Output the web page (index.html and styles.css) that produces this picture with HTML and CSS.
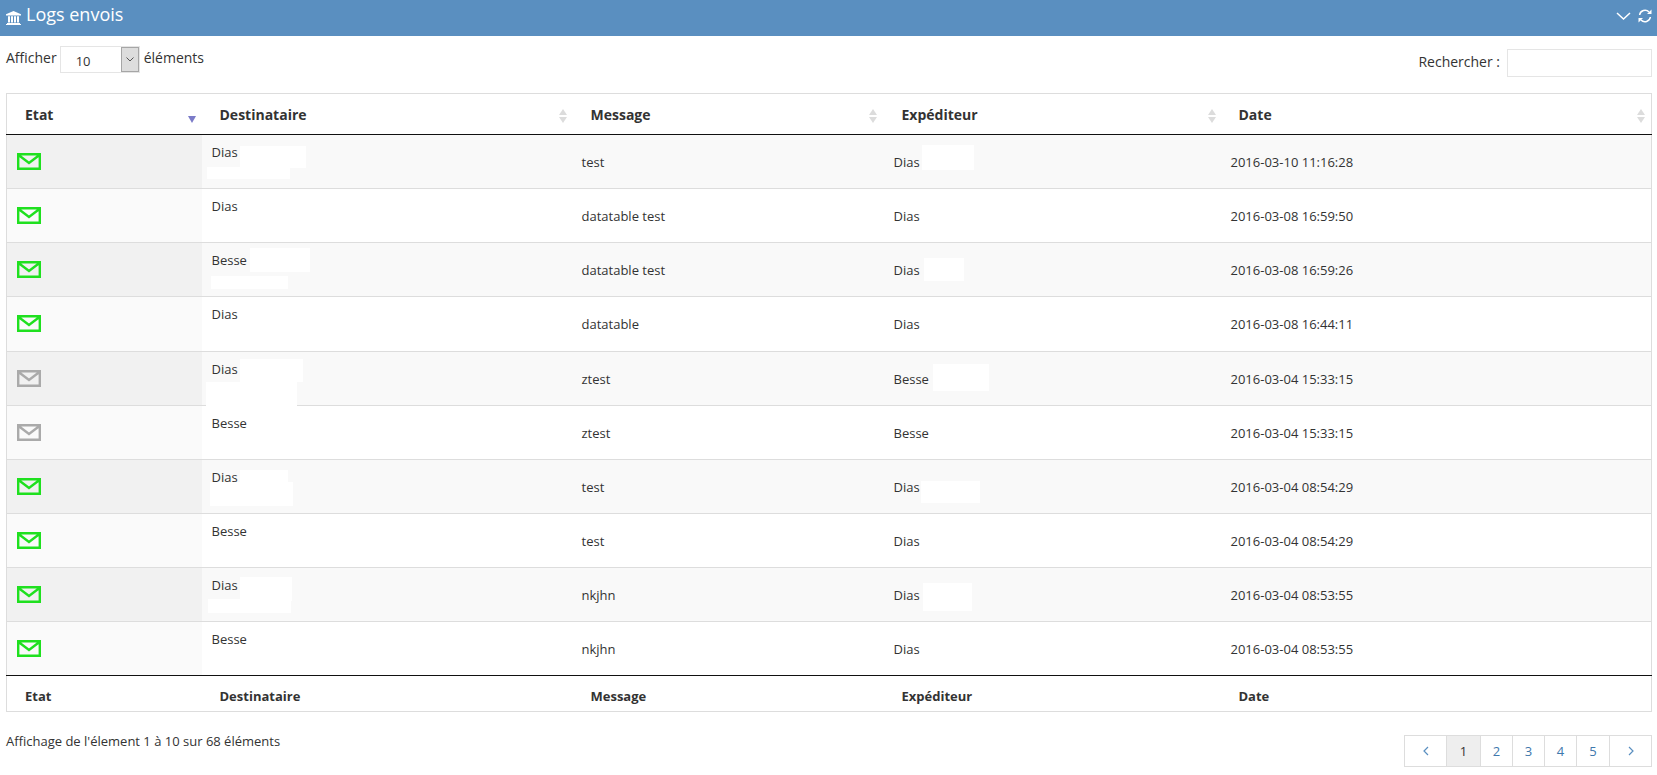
FILE: index.html
```html
<!DOCTYPE html>
<html lang="fr">
<head>
<meta charset="utf-8">
<title>Logs envois</title>
<link rel="stylesheet" href="styles.css">
</head>
<body>
<svg class="defs" width="0" height="0" aria-hidden="true">
  <symbol id="mail" viewBox="0 0 24 17"><path d="M1.2 1.2h21.6v14.6H1.2z M1.2 1.7L12 10l10.8-8.3" fill="none" stroke="currentColor" stroke-width="2.4"/></symbol>
</svg>
<header class="bar">
  <div class="bar-title">
    <svg class="bank" viewBox="0 0 15 14"><path d="M7.5 0L15 3.2v1.3H0V3.2z M1 12h13v1H1z M0 13h15v1H0z M2 5.2h2v6.2H2z M5 5.2h2v6.2H5z M8 5.2h2v6.2H8z M11 5.2h2v6.2h-2z" fill="#fff"/></svg>
    <h1>Logs envois</h1>
  </div>
  <div class="bar-tools">
    <svg class="chev" viewBox="0 0 15 8"><path d="M1 1l6.5 6L14 1" fill="none" stroke="#fff" stroke-width="1.5"/></svg>
    <svg class="refresh" viewBox="0 0 14 14"><path d="M1.6 6A5.5 5.5 0 0 1 11 3M12.4 8A5.5 5.5 0 0 1 3 11" fill="none" stroke="#fff" stroke-width="1.5"/><path d="M13.5 0.5V5H9z M0.5 13.5V9H5z" fill="#fff"/></svg>
  </div>
</header>
<main class="content">
  <div class="toolbar">
    <div class="length">
      <span class="len-text">Afficher</span>
      <div class="select"><span class="select-val">10</span><span class="select-btn"><svg viewBox="0 0 8 5"><path d="M0.5 0.5L4 4l3.5-3.5" fill="none" stroke="#555" stroke-width="1"/></svg></span></div>
      <span class="len-text after">éléments</span>
    </div>
    <label class="search"><span class="search-label">Rechercher :</span><input class="search-input" type="text"></label>
  </div>
  <table class="grid">
    <colgroup><col class="c1"><col class="c2"><col class="c3"><col class="c4"><col class="c5"></colgroup>
    <thead>
      <tr><th class="sorted">Etat</th><th class="sortable s-dest">Destinataire</th><th class="sortable s-msg">Message</th><th class="sortable s-from">Expéditeur</th><th class="sortable s-date">Date</th></tr>
    </thead>
    <tbody>
      <tr><td class="state"><svg class="mail ok"><use href="#mail"/></svg></td><td class="dest"><span class="who">Dias</span><i class="m a1"></i><i class="m b1"></i></td><td>test</td><td class="from">Dias<i class="m e1"></i></td><td>2016-03-10 11:16:28</td></tr>
      <tr><td class="state"><svg class="mail ok"><use href="#mail"/></svg></td><td class="dest"><span class="who">Dias</span></td><td>datatable test</td><td class="from">Dias</td><td>2016-03-08 16:59:50</td></tr>
      <tr><td class="state"><svg class="mail ok"><use href="#mail"/></svg></td><td class="dest"><span class="who">Besse</span><i class="m a3"></i><i class="m b3"></i></td><td>datatable test</td><td class="from">Dias<i class="m e3"></i></td><td>2016-03-08 16:59:26</td></tr>
      <tr class="tall"><td class="state"><svg class="mail ok"><use href="#mail"/></svg></td><td class="dest"><span class="who">Dias</span></td><td>datatable</td><td class="from">Dias</td><td>2016-03-08 16:44:11</td></tr>
      <tr><td class="state"><svg class="mail off"><use href="#mail"/></svg></td><td class="dest"><span class="who">Dias</span><i class="m a5"></i><i class="m b5"></i></td><td>ztest</td><td class="from">Besse<i class="m e5"></i></td><td>2016-03-04 15:33:15</td></tr>
      <tr><td class="state"><svg class="mail off"><use href="#mail"/></svg></td><td class="dest"><span class="who">Besse</span></td><td>ztest</td><td class="from">Besse</td><td>2016-03-04 15:33:15</td></tr>
      <tr><td class="state"><svg class="mail ok"><use href="#mail"/></svg></td><td class="dest"><span class="who">Dias</span><i class="m a7"></i><i class="m b7"></i></td><td>test</td><td class="from">Dias<i class="m e7"></i></td><td>2016-03-04 08:54:29</td></tr>
      <tr><td class="state"><svg class="mail ok"><use href="#mail"/></svg></td><td class="dest"><span class="who">Besse</span></td><td>test</td><td class="from">Dias</td><td>2016-03-04 08:54:29</td></tr>
      <tr><td class="state"><svg class="mail ok"><use href="#mail"/></svg></td><td class="dest"><span class="who">Dias</span><i class="m a9"></i><i class="m b9"></i></td><td>nkjhn</td><td class="from">Dias<i class="m e9"></i></td><td>2016-03-04 08:53:55</td></tr>
      <tr><td class="state"><svg class="mail ok"><use href="#mail"/></svg></td><td class="dest"><span class="who">Besse</span></td><td>nkjhn</td><td class="from">Dias</td><td>2016-03-04 08:53:55</td></tr>
    </tbody>
    <tfoot>
      <tr><th>Etat</th><th>Destinataire</th><th>Message</th><th>Expéditeur</th><th class="f-date">Date</th></tr>
    </tfoot>
  </table>
  <div class="footer">
    <div class="info">Affichage de l'élement 1 à 10 sur 68 éléments</div>
    <nav class="pager">
      <a class="page prev" href="#"><svg viewBox="0 0 6 10"><path d="M5 1L1 5l4 4" fill="none" stroke="#5a8fc0" stroke-width="1.2"/></svg></a>
      <a class="page current" href="#">1</a>
      <a class="page" href="#">2</a>
      <a class="page" href="#">3</a>
      <a class="page" href="#">4</a>
      <a class="page wide" href="#">5</a>
      <a class="page next" href="#"><svg viewBox="0 0 6 10"><path d="M1 1l4 4-4 4" fill="none" stroke="#5a8fc0" stroke-width="1.2"/></svg></a>
    </nav>
  </div>
</main>
</body>
</html>
```
FILE: styles.css
```css
* { box-sizing: border-box; }
html, body { margin: 0; padding: 0; height: 100%; overflow: hidden; background: #fff; }
body { font-family: "Open Sans", "Noto Sans", sans-serif; font-size: 13px; color: #333; }
.defs { position: absolute; }

.bar { height: 36px; background: #5a8fc0; display: flex; justify-content: space-between; align-items: center; padding: 0 5px 0 6px; color: #fff; }
.bar-title { display: flex; align-items: center; gap: 5px; }
.bar-title h1 { margin: 0 0 8px; font-size: 18px; font-weight: 400; line-height: 30px; }
.bank { width: 15px; height: 14px; margin-top: 0; }
.bar-tools { display: flex; align-items: center; gap: 7px; }
.chev { width: 15px; height: 8px; margin-bottom: 5px; }
.refresh { width: 14px; height: 14px; margin-bottom: 5px; }

.content { padding: 0 5px 0 6px; }
.toolbar { height: 57px; display: flex; justify-content: space-between; align-items: flex-start; }
.length { display: flex; align-items: flex-start; gap: 3px; padding-top: 10px; line-height: 20px; font-size: 14px; }
.len-text { padding-top: 2px; }
.len-text.after { margin-left: 1px; }
.select { width: 80px; height: 27px; display: flex; justify-content: space-between; border: 1px solid #e5e5e5; background: #fff; font-size: 13px; }
.select-val { padding: 4px 0 0 15px; line-height: 20px; }
.select-btn { width: 18px; height: 25px; border: 1px solid #a6a6a6; background: #ddd; display: flex; align-items: center; justify-content: center; }
.select-btn svg { width: 8px; height: 5px; }
.search { display: flex; align-items: center; gap: 7px; padding-top: 13px; font-size: 14px; }
.search-label { margin-bottom: 4px; }
.search-input { width: 145px; height: 28px; border: 1px solid #e5e5e5; background: #fff; padding: 0; outline: none; }

.grid { width: 1646px; table-layout: fixed; border-collapse: collapse; border: 1px solid #ddd; }
.c1 { width: 195px; }
.c2 { width: 371px; }
.c3 { width: 311px; }
.c4 { width: 338px; }
.grid th { text-align: left; font-weight: 700; color: #333; padding: 0 0 0 18px; position: relative; }
.grid thead th { height: 41px; font-size: 14px; border-bottom: 1px solid #111; }
.grid tfoot th { height: 36px; font-size: 13px; border-top: 1px solid #111; padding-top: 4px; }
.grid thead th.s-date, .grid tfoot th.f-date { padding-left: 17px; }
.grid td { height: 54px; padding: 0 0 0 9px; border-top: 1px solid #ddd; line-height: 20px; position: relative; vertical-align: middle; }
.grid tr.tall td { height: 55px; }
.grid tbody tr:first-child td { border-top: 0; }
.grid tbody tr:nth-child(odd) td { background: #f9f9f9; }
.grid tbody tr:nth-child(odd) td.state { background: #f1f1f1; }
.grid tbody tr:nth-child(even) td.state { background: #fafafa; }
.grid td.state, .grid td.dest, .grid td.from { padding-left: 10px; }

.sorted::after { content: ""; position: absolute; right: 6px; top: 22px; border: 4px solid transparent; border-top: 7px solid #7b7bc8; border-bottom: 0; }
.sortable::before { content: ""; position: absolute; right: 6px; top: 15px; border: 4px solid transparent; border-bottom: 6px solid #dcdcdc; border-top: 0; }
.sortable::after { content: ""; position: absolute; right: 6px; top: 23px; border: 4px solid transparent; border-top: 6px solid #dcdcdc; border-bottom: 0; }
.s-msg::before, .s-msg::after { right: 7px; }

.mail { display: block; width: 24px; height: 17px; margin-top: -1px; }
.mail.ok { color: #1fe01f; }
.mail.off { color: #aaa; }
.who { display: block; padding-bottom: 20px; }

.m { position: absolute; background: #fff; }
.a1 { left: 38px; top: 11px; width: 66px; height: 22px; }
.b1 { left: 5px; top: 32px; width: 83px; height: 12px; }
.a3 { left: 48px; top: 5px; width: 60px; height: 24px; }
.b3 { left: 9px; top: 33px; width: 77px; height: 13px; }
.a5 { left: 38px; top: 7px; width: 63px; height: 23px; }
.b5 { left: 4px; top: 30px; width: 91px; height: 24px; }
.a7 { left: 38px; top: 10px; width: 48px; height: 14px; }
.b7 { left: 8px; top: 22px; width: 83px; height: 24px; }
.a9 { left: 38px; top: 9px; width: 52px; height: 24px; }
.b9 { left: 6px; top: 31px; width: 83px; height: 14px; }
.e1 { left: 38px; top: 10px; width: 52px; height: 25px; }
.e3 { left: 40px; top: 15px; width: 40px; height: 23px; }
.e5 { left: 49px; top: 12px; width: 56px; height: 27px; }
.e7 { left: 37px; top: 21px; width: 59px; height: 22px; }
.e9 { left: 39px; top: 15px; width: 49px; height: 28px; }

.footer { display: flex; justify-content: space-between; align-items: flex-start; }
.info { padding-top: 19px; line-height: 20px; }
.pager { display: flex; margin-top: 23px; height: 32px; }
.page { width: 33px; margin-left: -1px; border: 1px solid #ddd; display: flex; align-items: center; justify-content: center; color: #3f78ad; text-decoration: none; font-size: 13px; background: #fff; }
.page.current { width: 35px; background: #eee; color: #333; }
.page.wide { width: 34px; }
.page.prev, .page.next { width: 43px; }
.page svg { width: 6px; height: 10px; }
```
